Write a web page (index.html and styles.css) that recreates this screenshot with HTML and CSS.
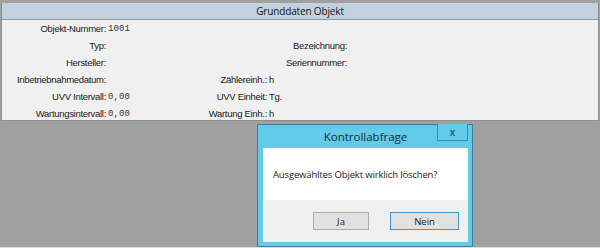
FILE: index.html
```html
<!DOCTYPE html>
<html lang="de">
<head>
    <meta charset="UTF-8">
    <title>Grunddaten Objekt</title>
    <link rel="stylesheet" href="styles.css">
</head>
<body>
    <div class="screen">
        <div class="panel">
            <div class="panel-header">Grunddaten Objekt</div>
            <div class="panel-body">
                <div class="fields">
                    <span class="lbl">Objekt-Nummer:</span><span class="val mono">1001</span>
                    <span class="lbl"></span><span class="val"></span>
                    <span class="lbl"></span><span class="val"></span>

                    <span class="lbl">Typ:</span><span class="val"></span>
                    <span class="lbl"></span><span class="val"></span>
                    <span class="lbl">Bezeichnung:</span><span class="val"></span>

                    <span class="lbl">Hersteller:</span><span class="val"></span>
                    <span class="lbl"></span><span class="val"></span>
                    <span class="lbl">Seriennummer:</span><span class="val"></span>

                    <span class="lbl">Inbetriebnahmedatum:</span><span class="val"></span>
                    <span class="lbl">Zählereinh.:</span><span class="val">h</span>
                    <span class="lbl"></span><span class="val"></span>

                    <span class="lbl">UVV Intervall:</span><span class="val mono">0,00</span>
                    <span class="lbl">UVV Einheit:</span><span class="val">Tg.</span>
                    <span class="lbl"></span><span class="val"></span>

                    <span class="lbl">Wartungsintervall:</span><span class="val mono">0,00</span>
                    <span class="lbl">Wartung Einh.:</span><span class="val">h</span>
                    <span class="lbl"></span><span class="val"></span>
                </div>
            </div>
        </div>

        <!-- Modal confirm dialog -->
        <div class="dialog">
            <div class="dialog-title">
                <span>Kontrollabfrage</span>
                <button class="btn-close">x</button>
            </div>
            <div class="dialog-msg">Ausgewähltes Objekt wirklich löschen?</div>
            <div class="dialog-buttons">
                <button class="btn">Ja</button>
                <button class="btn btn-default">Nein</button>
            </div>
        </div>
    </div>
</body>
</html>
```

FILE: styles.css
```css
* {
    margin: 0;
    padding: 0;
    box-sizing: border-box;
}

body {
    background: #a0a0a0;
    font-family: 'Liberation Sans', Arial, sans-serif;
    overflow: hidden;
}

.screen {
    position: relative;
    width: 600px;
    height: 248px;
    padding: 3px 1px 0 1px;
    border-bottom: 1px solid #dedede;
}

/* Grunddaten panel */
.panel {
    background: #f0f0f0;
    border: 1px solid #8e8e8e;
    border-top: none;
    height: 118px;
}

.panel-header {
    height: 17px;
    background: #c3d2de;
    border-bottom: 1px solid #979797;
    font-family: 'Open Sans', sans-serif;
    font-size: 10px;
    line-height: 17px;
    letter-spacing: -0.15px;
    text-align: center;
    color: #141414;
}

.panel-body {
    height: 99px;
}

.fields {
    display: grid;
    grid-template-columns: 104px 58px 103px 16px 64px 1fr;
    grid-auto-rows: 17px;
    font-size: 9.5px;
    line-height: 17px;
    color: #1a1a1a;
    letter-spacing: -0.3px;
}

.lbl {
    text-align: right;
    white-space: nowrap;
}

.val {
    padding-left: 2px;
    white-space: nowrap;
}

.mono {
    font-family: 'Liberation Mono', 'Courier New', monospace;
    font-size: 9px;
    letter-spacing: 0.1px;
    padding-top: 1px;
    color: #3a3348;
}

/* Dialog */
.dialog {
    position: absolute;
    left: 257px;
    top: 124px;
    width: 216px;
    height: 123px;
    background: #62cbe9;
    border: 1px solid #3d7f9c;
    padding: 0 4px 4px 5px;
    display: flex;
    flex-direction: column;
    font-family: 'Open Sans', sans-serif;
}

.dialog-title {
    position: relative;
    height: 23px;
    display: flex;
    align-items: center;
    justify-content: center;
    font-size: 11.5px;
    color: #1c2a33;
}

.btn-close {
    position: absolute;
    top: -1px;
    right: 0;
    width: 31px;
    height: 17px;
    background: #62cbe9;
    border: 1px solid #3b8cae;
    border-top: none;
    color: #34505e;
    font-family: 'Open Sans', sans-serif;
    font-size: 10px;
    font-weight: 600;
    line-height: 14px;
}

.dialog-msg {
    background: #ffffff;
    height: 52px;
    padding-left: 10px;
    display: flex;
    align-items: center;
    font-size: 9.5px;
    letter-spacing: -0.15px;
    white-space: nowrap;
    color: #222;
}

.dialog-buttons {
    flex: 1;
    background: #f0f0f0;
    display: flex;
    justify-content: flex-end;
    align-items: flex-start;
    gap: 21px;
    padding: 12px 9px 0 0;
}

.btn {
    width: 56px;
    height: 18px;
    background: #e1e1e1;
    border: 1px solid #adadad;
    font-family: 'Open Sans', sans-serif;
    font-size: 9.5px;
    color: #222;
}

.btn-default {
    width: 69px;
    border-color: #4e94c7;
}
```
